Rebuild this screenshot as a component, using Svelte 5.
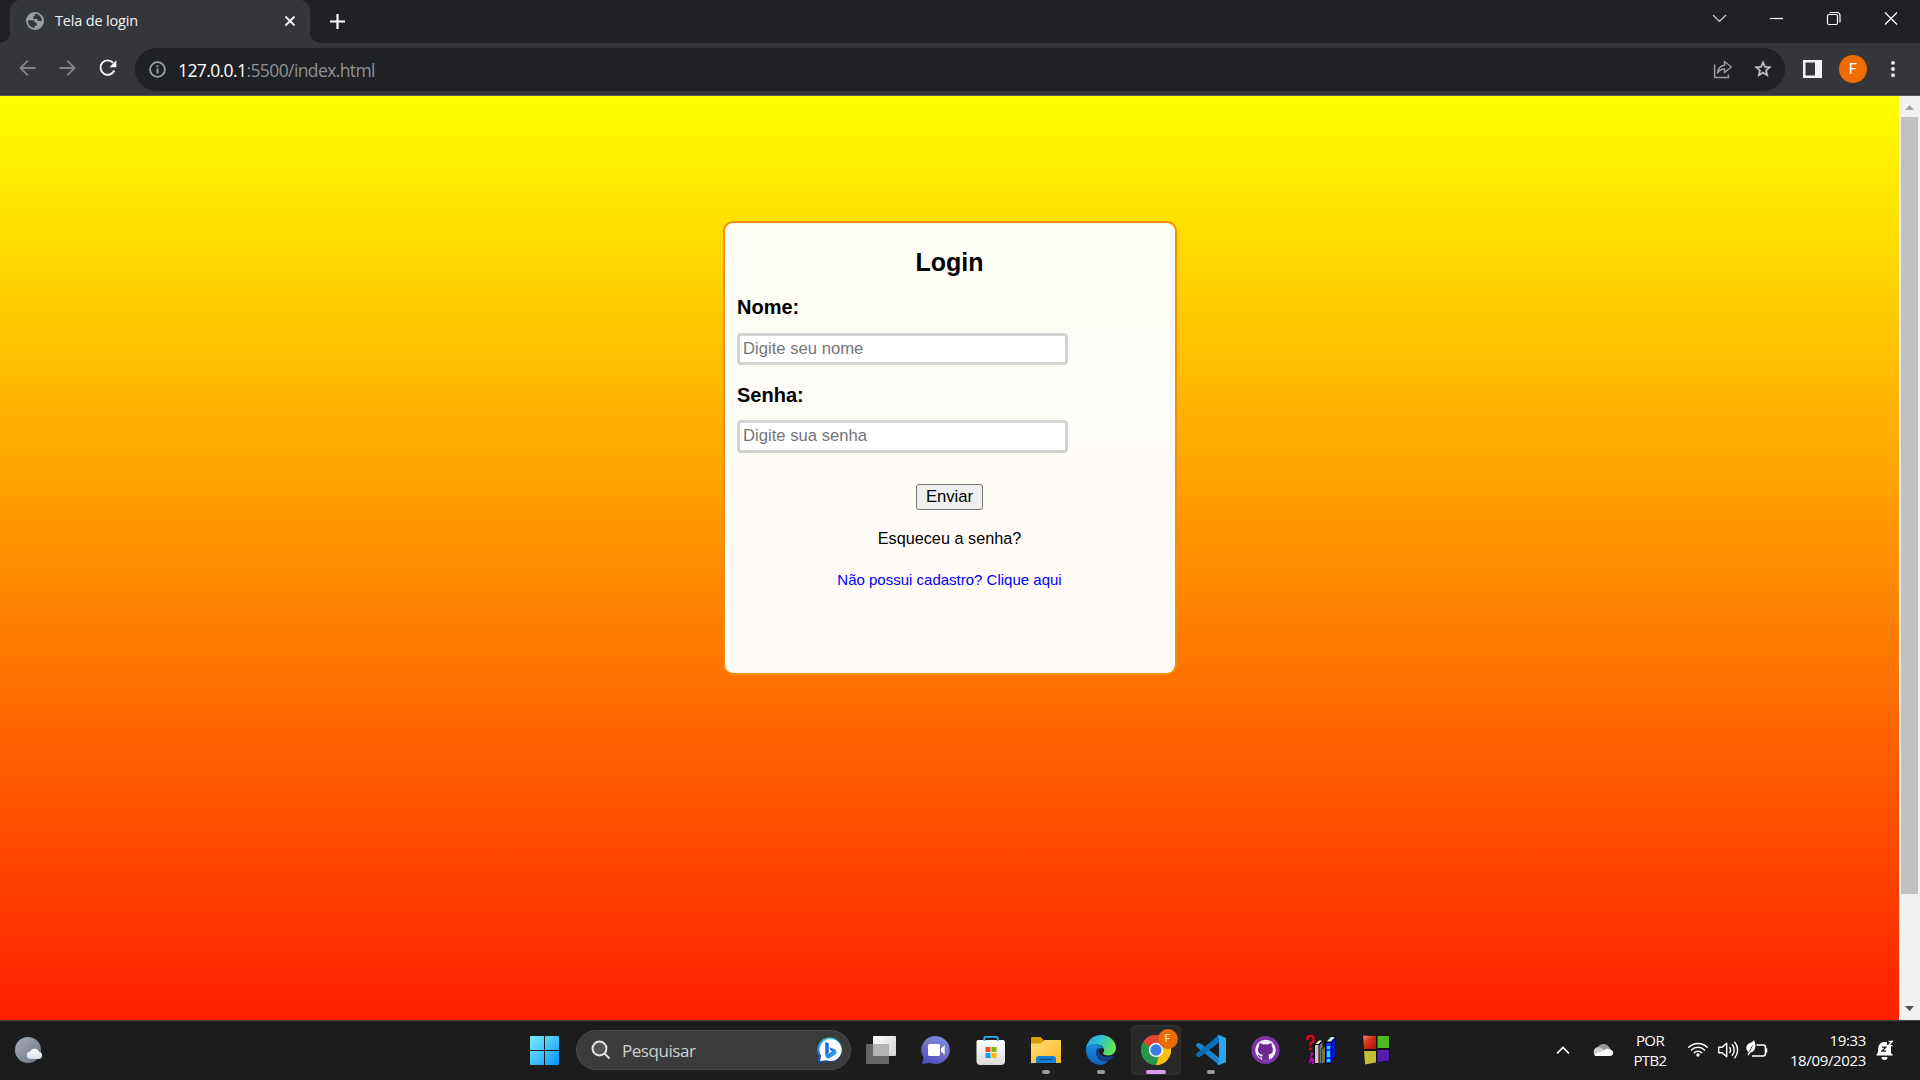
<script>
  let nome = $state('');
  let senha = $state('');
</script>

<div class="screen">
  <header class="tabs">
    <div class="tab">
      <svg class="favicon" width="18" height="18" viewBox="0 0 18 18">
        <circle cx="9" cy="9" r="9" fill="#9aa0a6" />
        <path d="M2.1 8.2h4.1c2.2 0 2.7 1.3 2.7 2.5h1.9v3.1H8.7v2.3C5 16.100 1.900 13 1.900 9.300zM9.400 1.800c-.9.700-1.100 1.700-.4 2.500H7.300v2.600h3.600c.2 1.500 1.300 2.200 2.700 2.100l2.400-.1C16 5 13 1.900 9.400 1.800z" fill="#35363a" />
      </svg>
      <span class="tab-title">Tela de login</span>
      <svg class="tab-close" width="12" height="12" viewBox="0 0 12 12"><path d="M1.500 1.500l9 9m0-9l-9 9" stroke="#f1f3f4" stroke-width="1.900" /></svg>
    </div>
    <svg class="plus" width="15" height="15" viewBox="0 0 15 15"><path d="M7.500 0v15M0 7.500h15" stroke="#fff" stroke-width="2.200" /></svg>
    <div class="winbtns">
      <svg width="58" height="36" viewBox="0 0 58 36"><path d="M23 15l6.500 6.500L36 15" fill="none" stroke="#d0d1d3" stroke-width="1.200" /></svg>
      <svg width="57" height="36" viewBox="0 0 57 36"><path d="M22 18.500h13" stroke="#fff" stroke-width="1.200" /></svg>
      <svg width="57" height="36" viewBox="0 0 57 36"><rect x="22.500" y="14.500" width="10" height="10" rx="1.500" fill="none" stroke="#fff" stroke-width="1.200" /><path d="M24.500 12.500h7.500a3 3 0 0 1 3 3V22.500" fill="none" stroke="#fff" stroke-width="1.200" /></svg>
      <svg width="58" height="36" viewBox="0 0 58 36"><path d="M23 12.500l12 12m0-12l-12 12" stroke="#fff" stroke-width="1.200" /></svg>
    </div>
  </header>

  <div class="toolbar">
    <svg class="nav" width="40" height="40" viewBox="0 0 40 40"><path d="M27.500 21H12.500m7.300-7.300L12.500 21l7.300 7.300" fill="none" stroke="#85868a" stroke-width="1.900" /></svg>
    <svg class="nav" width="40" height="40" viewBox="0 0 40 40"><path d="M11.500 21h15m-7.300-7.300l7.300 7.300-7.300 7.300" fill="none" stroke="#85868a" stroke-width="1.900" /></svg>
    <svg class="nav" width="40" height="40" viewBox="0 0 40 40"><path d="M26.300 23.500a7.200 7.200 0 1 1-1.200-7.700" fill="none" stroke="#f4f5f6" stroke-width="1.900" /><path d="M28.300 13.300v6.900h-6.900z" fill="#f4f5f6" /></svg>
    <div class="omnibox">
      <svg width="17" height="17" viewBox="0 0 17 17"><circle cx="8.500" cy="8.500" r="7.400" fill="none" stroke="#9aa0a6" stroke-width="1.800" /><path d="M8.500 7.500v5M8.500 4.300v1.900" stroke="#9aa0a6" stroke-width="1.900" /></svg>
      <span class="url"><b>127.0.0.1</b>:5500/index.html</span>
      <svg class="share" width="20" height="20" viewBox="0 0 20 20"><path d="M1.600 5.500v12.900h13.800v-3" fill="none" stroke="#9c9d9f" stroke-width="1.500" /><path d="M11.500 6.300V2.500L18.300 8l-6.800 5.500V10c-3.200 0-5.300 1.100-6.800 4 .3-4.300 2.700-7.200 6.800-7.700z" fill="none" stroke="#9c9d9f" stroke-width="1.500" stroke-linejoin="round" /></svg>
      <svg class="star" width="20" height="20" viewBox="0 0 24 24"><path d="M22 9.240l-7.190-.62L12 2 9.190 8.630 2 9.240l5.460 4.730L5.820 21 12 17.270 18.180 21l-1.630-7.030L22 9.240zM12 15.400l-3.760 2.270 1-4.280-3.320-2.880 4.380-.38L12 6.100l1.710 4.040 4.380.38-3.320 2.880 1 4.280L12 15.400z" fill="#c5c6c8" stroke="#c5c6c8" stroke-width=".5" /></svg>
    </div>
    <svg class="panel" width="19" height="18" viewBox="0 0 19 18"><path d="M0 0h19v18H0zM2.500 2.500v13H12v-13z" fill="#f1f3f4" fill-rule="evenodd" /></svg>
    <span class="avatar">F</span>
    <svg class="dots" width="6" height="18" viewBox="0 0 6 18"><g fill="#f1f3f4"><circle cx="3" cy="2.800" r="1.900" /><circle cx="3" cy="9" r="1.900" /><circle cx="3" cy="15.200" r="1.900" /></g></svg>
  </div>

  <div class="view">
    <main class="page">
      <form class="card" onsubmit={(e) => e.preventDefault()}>
        <h1>Login</h1>
        <label for="nome">Nome:</label>
        <input id="nome" class="first" placeholder="Digite seu nome" bind:value={nome} />
        <label for="senha">Senha:</label>
        <input id="senha" class="second" type="password" placeholder="Digite sua senha" bind:value={senha} />
        <button type="submit">Enviar</button>
        <p class="forgot">Esqueceu a senha?</p>
        <p class="signup">Não possui cadastro? Clique aqui</p>
      </form>
    </main>
    <div class="scroll">
      <svg width="21" height="21" viewBox="0 0 21 21"><path d="M6 14l4.500-5 4.500 5z" fill="#a3a3a3" /></svg>
      <div class="thumb"></div>
      <svg width="21" height="21" viewBox="0 0 21 21"><path d="M6 7l4.500 5L15 7z" fill="#505050" /></svg>
    </div>
  </div>

  <footer class="taskbar">
    <svg class="weather" width="30" height="30" viewBox="0 0 30 30">
      <defs>
        <linearGradient id="moon" x2="1" y2="1"><stop stop-color="#a5b0bb" /><stop offset="1" stop-color="#68717b" /></linearGradient>
        <linearGradient id="cl" x2="0" y2="1"><stop stop-color="#fff" /><stop offset="1" stop-color="#d5dbe1" /></linearGradient>
      </defs>
      <circle cx="14" cy="15" r="13" fill="url(#moon)" />
      <path d="M15.500 24a3.800 3.800 0 0 1 .5-7.400 5 5 0 0 1 9.200.4 3.600 3.600 0 0 1 .3 7z" fill="url(#cl)" />
    </svg>

    <svg class="start" width="30" height="30" viewBox="0 0 30 30">
      <defs><linearGradient id="win" gradientUnits="userSpaceOnUse" x1="0" y1="0" x2="29" y2="29"><stop stop-color="#7deaff" /><stop offset=".5" stop-color="#45c4fb" /><stop offset="1" stop-color="#0d94f6" /></linearGradient></defs>
      <path d="M1 1h13v14H0V2a1 1 0 0 1 1-1zM15 1h13a1 1 0 0 1 1 1v13H15zM0 16h14v14H1a1 1 0 0 1-1-1zM15 16h14v13a1 1 0 0 1-1 1H15z" fill="url(#win)" />
    </svg>

    <div class="search">
      <svg width="20" height="20" viewBox="0 0 20 20"><circle cx="8.500" cy="8.500" r="7" fill="#555" stroke="#e9e9e9" stroke-width="1.900" /><path d="M13.500 13.500l5 5" stroke="#d5d5d5" stroke-width="2.200" /></svg>
      <span>Pesquisar</span>
      <svg class="bing" width="26" height="26" viewBox="0 0 26 26">
        <defs>
          <linearGradient id="bg1" x2="0" y2="1"><stop stop-color="#25d0ea" /><stop offset=".45" stop-color="#2f8be8" /><stop offset="1" stop-color="#1444b8" /></linearGradient>
          <linearGradient id="bg2" x2="1" y2="1"><stop stop-color="#1550d0" /><stop offset="1" stop-color="#36c6ee" /></linearGradient>
        </defs>
        <path d="M13 .500a12.300 12.300 0 1 1-4 24L.500 25.500l1.500-6.500A12.300 12.300 0 0 1 13 .500z" fill="url(#bg1)" />
        <path d="M13.500 2a11 11 0 1 1-4 21.200L3 24l1.300-5A11 11 0 0 1 13.500 2z" fill="#fff" />
        <path d="M8.300 5l3.400 1.300v9.500l-3.400 2.600z" fill="#1d62dd" />
        <path d="M8.300 18.300l7-4-1.700-.8-1.300-3.300 6 2.300c1.800 1.200 1.600 4.200 0 5.300l-5.600 3.300c-1.700.9-4.300-.2-4.400-2.800z" fill="url(#bg2)" />
      </svg>
    </div>

    <div class="apps">
      <div class="app">
        <svg width="30" height="30" viewBox="0 0 30 30">
          <defs><linearGradient id="tv" x2="1" y2="1"><stop stop-color="#fff" /><stop offset="1" stop-color="#d2d2d2" /></linearGradient></defs>
          <rect x="7" y="1" width="23" height="20" rx="1" fill="url(#tv)" /><rect x="0" y="9" width="23" height="20" rx="1" fill="#666" /><path d="M7 9h16v12H7z" fill="#b5b5b5" />
        </svg>
      </div>
      <div class="app">
        <svg width="30" height="30" viewBox="0 0 30 30">
          <defs><linearGradient id="chat" x1=".8" y1="0" x2=".3" y2="1"><stop stop-color="#6f8fe8" /><stop offset=".4" stop-color="#7c75c4" /><stop offset="1" stop-color="#4b4fc4" /></linearGradient></defs>
          <path d="M15 1a14 14 0 1 1-5.500 27L1 29l1.500-6.500A14 14 0 0 1 15 1z" fill="url(#chat)" />
          <rect x="7" y="9" width="12" height="12" rx="1.500" fill="#fff" /><path d="M20 13.500l3.700-3.200v9.400L20 16.500z" fill="#fff" />
        </svg>
      </div>
      <div class="app">
        <svg width="30" height="30" viewBox="0 0 30 30">
          <defs><linearGradient id="bag" x2="0" y2="1"><stop stop-color="#fff" /><stop offset="1" stop-color="#dcdcdc" /></linearGradient></defs>
          <path d="M.5 6.500L1.500 5h26l1.500 1.500V26a4 4 0 0 1-4 4H4.500a4 4 0 0 1-4-4z" fill="url(#bag)" />
          <path d="M8.300 6V3a1.200 1.200 0 0 1 1.200-1.200h11A1.200 1.200 0 0 1 21.700 3v3" fill="none" stroke="#2cb2ee" stroke-width="1.800" />
          <path d="M9.500 12h5v5h-5z" fill="#f25022" /><path d="M15.500 12h5v5h-5z" fill="#7fba00" /><path d="M9.500 18h5v5h-5z" fill="#00a4ef" /><path d="M15.500 18h5v5h-5z" fill="#ffb900" />
        </svg>
      </div>
      <div class="app">
        <svg width="30" height="30" viewBox="0 0 30 30">
          <defs><linearGradient id="fold" x2="1" y2="1"><stop stop-color="#ffe078" /><stop offset="1" stop-color="#fbb82a" /></linearGradient></defs>
          <path d="M0 3a1 1 0 0 1 1-1h8.500l3 3v4H0z" fill="#dc9c05" /><path d="M0 8.500h9.500L13.500 5H29a1 1 0 0 1 1 1v22H0z" fill="url(#fold)" />
          <path d="M5 28v-4a3 3 0 0 1 3-3h14a3 3 0 0 1 3 3v4z" fill="#1380d5" /><path d="M9 24.500h12" stroke="#0b4f91" stroke-width="1.400" stroke-linecap="round" />
        </svg>
        <i></i>
      </div>
      <div class="app">
        <svg width="30" height="30" viewBox="0 0 256 256">
          <defs>
            <linearGradient id="e1" x1="0" y1="0" x2="1" y2=".3"><stop stop-color="#2c9fe5" /><stop offset=".5" stop-color="#2cc3d5" /><stop offset="1" stop-color="#63e551" /></linearGradient>
            <linearGradient id="e2" x2="0" y2="1"><stop stop-color="#1a8cde" /><stop offset="1" stop-color="#0c62ba" /></linearGradient>
          </defs>
          <path d="M0 128C4 50 60 0 128 0c80 0 128 58 128 108 0 40-30 66-68 66-34 0-45-12-42-20 4-7 9-10 9-24 0-24-25-49-62-49C50 81 8 100 0 128z" fill="url(#e1)" />
          <path d="M0 130C3 95 45 70 91 80c35 6 58 24 62 45-16-25-64-9-64 33 0 47 50 76 96 64-10 18-29 34-57 34C55 256 0 198 0 130z" fill="url(#e2)" />
          <path d="M105 103c-13 12-23 34-20 57 7 51 66 79 112 56 16-8 31-25 39-37 2-5-2-6-6-4-67 27-120-4-125-48z" fill="#143f83" />
        </svg>
        <i></i>
      </div>
      <div class="app active">
        <svg width="30" height="30" viewBox="0 0 30 30">
          <path d="M15 15L2 7.500A15 15 0 0 1 28 7.500z" fill="#e44335" /><path d="M15 15L28 7.500A15 15 0 0 1 15 30z" fill="#fbc116" /><path d="M15 15v15A15 15 0 0 1 2 7.500z" fill="#27984a" />
          <path d="M15 8h13.200A15 15 0 0 1 15 30l6-11.500z" fill="#fbc116" /><path d="M2 7.500L9 18.500l6 3.500 2.700 0L15 30A15 15 0 0 1 2 7.500z" fill="#27984a" /><path d="M2 7.500A15 15 0 0 1 28.200 8H15L9 12z" fill="#e44335" />
          <circle cx="15" cy="15" r="7.200" fill="#fff" /><circle cx="15" cy="15" r="5.700" fill="#377eea" />
        </svg>
        <span class="badge">F</span>
        <i class="on"></i>
      </div>
      <div class="app">
        <svg width="30" height="30" viewBox="0 0 30 30">
          <path d="M0 9.800L2 8l1.800 0L23 22.500V30L.3 11.400z" fill="#1684cc" /><path d="M0 20.200L2 22h1.800L23 7.500V0L.3 18.600z" fill="#0a70b8" />
          <path d="M21.500.300L23 0l7 3v24l-7 3-1.500-.8L23 27V3z" fill="#2ba4ee" />
        </svg>
        <i></i>
      </div>
      <div class="app">
        <svg width="30" height="30" viewBox="0 0 30 30">
          <circle cx="14.500" cy="15" r="14" fill="#7d34a8" />
          <circle cx="14.500" cy="15" r="10.300" fill="#f5effa" />
          <path d="M8.500 8.200c1.500 0 2.800.7 3.600 1.300a11 11 0 0 1 4.800 0c.8-.6 2.100-1.300 3.600-1.300.4 1 .4 2 .1 2.800 1 1.100 1.300 2.200 1.300 3.500 0 3.700-2.200 4.800-4.800 5.100.6.600.8 1.200.8 2.200v3.200h-6.800v-2.400c-2 .4-3-.3-3.500-1.500-.4-.9-.8-1.100-1.300-1.600 1.400-.4 2.100.5 2.700 1.400.6.800 1.200.8 2.200.5.100-.8.300-1.300.7-1.700-2.700-.3-4.900-1.400-4.900-5.200 0-1.300.4-2.400 1.300-3.500-.2-.8-.2-1.800.2-2.800z" fill="#6b2a96" />
        </svg>
      </div>
      <div class="app">
        <svg width="30" height="30" viewBox="0 0 30 30">
          <path d="M1.500 5V2.500L3 1h3l1.500 1.500V6L4.500 8.500V11" fill="none" stroke="#e8001c" stroke-width="2.300" /><path d="M3 12.500h3V15H3z" fill="#e8001c" />
          <path d="M5 16l2.500 3L5 22l3 2v5H6v-3l-4 3 2-5z" fill="#c000c0" />
          <path d="M8 9l4-4h5v3l-3.500 3V29H8z" fill="#000" /><path d="M9 10h3.500v18H9z" fill="#c6c6c6" /><path d="M9.500 9L13 5.500h3L12.500 9z" fill="#fff" /><path d="M13.500 10l3-3v20l-3 2z" fill="#777" />
          <path d="M15.500 13h4v16h-4z" fill="#000" /><path d="M16 14l3-2v15l-3 2z" fill="#77762a" />
          <path d="M19 7l6-6h5v21l-5 7h-6z" fill="#000" /><path d="M20 8h5v20h-5z" fill="#0837f5" /><path d="M20.500 6.500L25 2h4l-4 4.500z" fill="#c8eaff" /><path d="M26 7l3.500-4v18L26 26z" fill="#0519cb" /><path d="M21 11h3v3h-3zm0 5h3v6h-3zm0 8h3v3h-3z" fill="#00f4f4" />
        </svg>
      </div>
      <div class="app">
        <svg width="30" height="30" viewBox="0 0 30 30">
          <defs><linearGradient id="rd" x2="1" y2="1"><stop stop-color="#f37b6c" /><stop offset=".5" stop-color="#cf2a18" /><stop offset="1" stop-color="#a51a10" /></linearGradient></defs>
          <path d="M1 0l28 1v25L3.500 30z" fill="#111" />
          <path d="M2 .500l13 .5v13H3z" fill="url(#rd)" /><path d="M16.500 1H28v12H16.500z" fill="#4cba22" /><path d="M3 16h12v11.500L4 29.500z" fill="#c4bd38" /><path d="M16.500 15H28v10.500l-11.500 1.800z" fill="#5220aa" />
        </svg>
      </div>
    </div>

    <div class="tray">
      <svg width="40" height="60" viewBox="0 0 40 60"><path d="M14 33.500l6-6 6 6" fill="none" stroke="#fff" stroke-width="1.700" /></svg>
      <svg width="40" height="60" viewBox="0 0 40 60">
        <path d="M14 30a6.500 6.500 0 0 1 12-3l4 6-16 3z" fill="#9a9a9a" /><path d="M14 36a4.500 4.500 0 0 1-.5-8.500c3-1 5 .5 7 2l-4 6.500z" fill="#cfcfcf" /><path d="M14.500 36c-1.500 0-3-.3-3.500-1.600L21.500 30c2-2 4.500-1.500 6-.3 3.800.4 3.600 6.300-.5 6.300z" fill="#fff" />
      </svg>
      <div class="lang"><span>POR</span><span>PTB2</span></div>
      <svg width="30" height="60" viewBox="0 0 30 60"><g fill="none" stroke="#fff" stroke-width="1.500" stroke-linecap="round"><path d="M5.800 27.200a13 13 0 0 1 18.400 0" /><path d="M8.500 30a9.200 9.200 0 0 1 13 0" /><path d="M11.300 32.700a5.300 5.300 0 0 1 7.400 0" /></g><circle cx="15" cy="35" r="1.700" fill="#fff" /></svg>
      <svg width="30" height="60" viewBox="0 0 30 60"><g fill="none" stroke="#fff" stroke-width="1.400" stroke-linecap="round"><path d="M5.700 27.300h3.500l4.500-4v13.400l-4.500-4H5.700z" stroke-linejoin="round" /><path d="M16.800 27.500a4.500 4.500 0 0 1 0 5M19.300 24.800a8 8 0 0 1 0 10.400M21.800 22.300a12 12 0 0 1 0 15.400" /></g></svg>
      <svg width="30" height="60" viewBox="0 0 30 60"><path d="M13.500 25h6.500a2.500 2.500 0 0 1 2.500 2.500v6a2.500 2.500 0 0 1-2.500 2.500H9M23.500 28.500v4" fill="none" stroke="#fff" stroke-width="1.600" /><path d="M11 20c2.500 5 2 11.500-3.500 12.500l-2 3-1.200-.8 1.500-2.700c-4-2-2.300-7.500 0-8.500C8.500 22.700 10 21.500 11 20z" fill="#fff" /><path d="M6.500 31.500l3-6" stroke="#1c1c1c" stroke-width=".8" /></svg>
      <div class="clock"><span>19:33</span><span>18/09/2023</span></div>
      <svg class="bell" width="20" height="60" viewBox="0 0 20 60"><path d="M1.500 34.500c2-2 1.500-4 1.800-7C3.800 24.500 6 22 9 22h3v3h4v8l1.800 1.700v.8H1.500zM6.500 37h6a3 3 0 0 1-6 0z" fill="#fff" /><path d="M7 27.200h3.800l-3.800 4h4" fill="none" stroke="#1c1c1c" stroke-width="1.300" /><path d="M13.500 21.500h3.700l-3.700 4.200h4" fill="none" stroke="#fff" stroke-width="1.300" /></svg>
    </div>
  </footer>
</div>

<style>
  :global(body) { margin: 0; overflow: hidden; }
  .screen { width: 1920px; height: 1080px; display: flex; flex-direction: column; overflow: hidden; font-family: 'Open Sans', sans-serif; }
  svg { display: block; flex: none; }

  .tabs { height: 43px; background: #202124; display: flex; align-items: flex-start; flex: none; }
  .tab { position: relative; box-sizing: border-box; width: 300px; height: 43px; margin-left: 10px; padding: 0 14px 1px 16px; border-radius: 10px 10px 0 0; background: #35363a; display: flex; align-items: center; }
  .tab::before, .tab::after { content: ''; position: absolute; bottom: 0; width: 10px; height: 10px; }
  .tab::before { left: -10px; background: radial-gradient(circle at 0 0, #202124 9.500px, #35363a 10px); }
  .tab::after { right: -10px; background: radial-gradient(circle at 100% 0, #202124 9.500px, #35363a 10px); }
  .tab-title { margin-left: 11px; font-size: 14.500px; letter-spacing: -0.18px; color: #f1f3f4; flex: 1; line-height: 20px; }
  .plus { margin: 14px 0 0 20px; }
  .winbtns { margin-left: auto; display: flex; }

  .toolbar { box-sizing: border-box; height: 53px; background: #35363a; border-bottom: 1px solid #55565a; display: flex; align-items: center; padding-left: 8px; flex: none; }
  .nav { margin-bottom: 4px; }
  .omnibox { box-sizing: border-box; width: 1650px; height: 43px; margin-left: 7px; border-radius: 22px; background: #202124; display: flex; align-items: center; padding: 0 12px 0 14px; }
  .url { margin-left: 12px; padding-top: 1px; font-size: 17.500px; letter-spacing: -0.6px; line-height: 24px; color: #8f9194; }
  .url b { font-weight: 400; color: #fff; }
  .share { margin-left: auto; }
  .star { margin-left: 20px; }
  .panel { margin-left: 18px; }
  .avatar { width: 28px; height: 28px; margin-left: 17px; border-radius: 50%; background: #ef6c00; color: #fff; font: 15px/28px Roboto, sans-serif; text-align: center; }
  .dots { margin-left: 22.500px; }

  .view { height: 924px; display: flex; flex: none; }
  .page { width: 1899px; background: linear-gradient(#ffff00, #ff0000) 0 0 / 100% 1049px no-repeat; display: flex; justify-content: center; align-items: flex-start; }
  .card { box-sizing: border-box; width: 454px; height: 454px; margin: 125px 0 0 1px; padding: 25px 13px 0 12px; border: 2px solid #f48c10; border-radius: 10px; background: rgba(255, 255, 255, 0.97); background-clip: padding-box; display: flex; flex-direction: column; align-items: center; font-family: 'Liberation Sans', Arial, sans-serif; color: #000; }
  h1 { margin: 0; font-size: 25px; line-height: 28px; }
  label { align-self: flex-start; margin-top: 18px; font-size: 20px; line-height: 24px; font-weight: bold; }
  h1 + label { margin-top: 19px; }
  input { box-sizing: border-box; align-self: flex-start; width: 331px; padding: 0 3px; border: 3px solid #d3d3d3; border-radius: 4px; background: #fff; font: 16.667px 'Liberation Sans', Arial, sans-serif; outline: none; }
  input::placeholder { color: #757575; }
  .first { height: 32px; margin: 14px 0 0; padding-bottom: 1px; }
  .second { height: 33px; margin: 13px 0 0; padding-bottom: 2px; }
  button { box-sizing: border-box; width: 67px; height: 26px; margin: 31px 0 0; padding: 0; border: 1px solid #767676; border-radius: 3px; background: #efefef; color: #000; font: 16.667px/24px 'Liberation Sans', Arial, sans-serif; }
  p { margin: 0; }
  .forgot { margin-top: 18px; font-size: 16.250px; line-height: 20px; }
  .signup { margin-top: 23px; font-size: 15px; line-height: 18px; color: #0000ff; }

  .scroll { width: 21px; background: #f1f1f1; display: flex; flex-direction: column; align-items: center; }
  .thumb { width: 17px; height: 777px; margin-bottom: auto; background: #c1c1c1; }

  .taskbar { box-sizing: border-box; height: 60px; padding-bottom: 1px; background: #1c1c1c; border-top: 1px solid #454545; display: flex; align-items: center; flex: none; color: #fff; }
  .weather { margin-left: 14px; }
  .start { margin-left: 486px; }
  .search { box-sizing: border-box; width: 275px; height: 40px; margin-left: 16px; padding: 0 7px 0 14px; border: 1px solid #4b4b4b; border-radius: 20px; background: #3b3b3b; display: flex; align-items: center; }
  .search span { margin-left: 11px; font-size: 17px; letter-spacing: -0.45px; color: #cfcfcf; }
  .bing { margin-left: auto; }
  .apps { margin-left: 2.500px; display: grid; grid-template-columns: repeat(10, 55px); }
  .app { position: relative; height: 58px; display: flex; align-items: center; justify-content: center; }
  .app i { position: absolute; left: 23.500px; bottom: 5px; width: 8px; height: 4px; border-radius: 2px; background: #9a9a9a; }
  .app i.on { left: 17.500px; width: 20px; background: #d79ae6; }
  .app svg { position: relative; }
  .active::before { content: ''; position: absolute; box-sizing: border-box; left: 2.500px; top: 4px; width: 50px; height: 50px; border: 1px solid #343434; border-radius: 5px; background: #292929; }
  .badge { position: absolute; left: 29px; top: 8px; width: 20px; height: 20px; border-radius: 50%; background: #ea6a05; color: #ffe9d6; font: 11px/20px Roboto, sans-serif; text-align: center; }
  .tray { margin-left: auto; padding-right: 25px; display: flex; align-items: center; font-size: 15px; line-height: 20px; letter-spacing: -0.6px; }
  .lang { width: 54px; margin-right: 6px; display: flex; flex-direction: column; align-items: center; }
  .clock { width: 93px; display: flex; flex-direction: column; align-items: flex-end; letter-spacing: -0.35px; }
  .bell { margin-left: 9px; }
</style>
